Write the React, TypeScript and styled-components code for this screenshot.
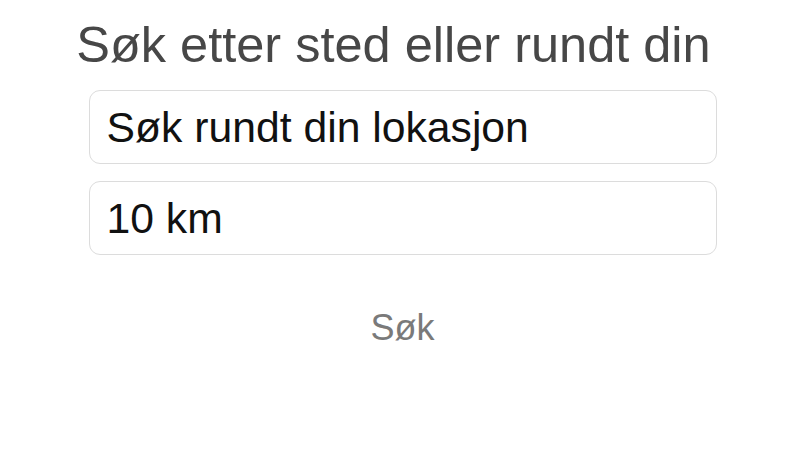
import React from "react";
import styled, { createGlobalStyle } from "styled-components";

const Global = createGlobalStyle`
  html, body { margin: 0; padding: 0; background: #fff; }
  body { font-family: "Liberation Sans", Arial, sans-serif; }
`;

const Page = styled.div`
  width: 805px;
  height: 452px;
  display: flex;
  flex-direction: column;
  align-items: center;
  box-sizing: border-box;
  padding-top: 16px;
`;

const Title = styled.h1`
  margin: 0;
  padding-right: 18px;
  font-size: 50.5px;
  font-weight: 400;
  color: #474747;
  line-height: 58px;
  letter-spacing: 0;
`;

const Fields = styled.div`
  width: 628px;
  display: flex;
  flex-direction: column;
  gap: 17px;
  margin-top: 16px;
`;

const Field = styled.div`
  height: 74px;
  box-sizing: border-box;
  border: 1.5px solid #dcdcdc;
  border-radius: 11px;
  display: flex;
  align-items: center;
  padding-left: 17px;
  font-size: 42.7px;
  color: #111;
`;

const SearchButton = styled.button`
  margin-top: 52px;
  border: none;
  background: none;
  font-family: inherit;
  font-size: 36px;
  color: #7a7a7a;
  padding: 0;
`;

export default function App() {
  return (
    <Page>
      <Global />
      <Title>Søk etter sted eller rundt din</Title>
      <Fields>
        <Field>Søk rundt din lokasjon</Field>
        <Field>10 km</Field>
      </Fields>
      <SearchButton>Søk</SearchButton>
    </Page>
  );
}
